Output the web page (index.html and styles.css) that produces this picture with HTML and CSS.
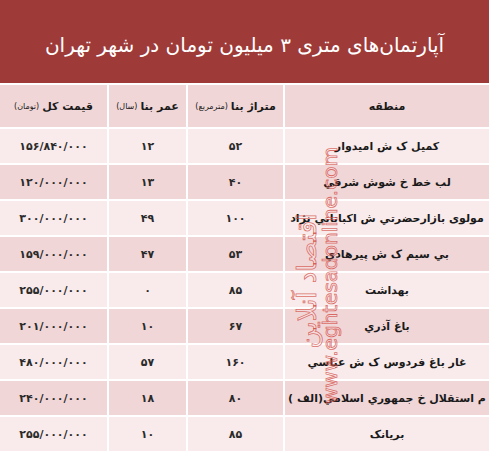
FILE: index.html
```html
<!DOCTYPE html>
<html lang="fa" dir="rtl">
<head>
<meta charset="utf-8">
<title>آپارتمان‌های متری ۳ میلیون تومان در شهر تهران</title>
<link rel="stylesheet" href="styles.css">
</head>
<body>
<div class="page">
  <header class="banner">
    <h1 class="title">آپارتمان‌های متری ۳ میلیون تومان در شهر تهران</h1>
  </header>
  <div class="table">
    <div class="cell head">منطقه</div>
    <div class="cell head">متراژ بنا <small>(مترمربع)</small></div>
    <div class="cell head">عمر بنا <small>(سال)</small></div>
    <div class="cell head">قیمت کل<small>(تومان)</small></div>

    <div class="cell light">کمیل ک ش امیدوار</div>
    <div class="cell light num">۵۲</div>
    <div class="cell light num">۱۲</div>
    <div class="cell light num price"><span dir="ltr">۱۵۶/۸۴۰/۰۰۰</span></div>

    <div class="cell dark">لب خط خ شوش شرقي</div>
    <div class="cell dark num">۴۰</div>
    <div class="cell dark num">۱۳</div>
    <div class="cell dark num price"><span dir="ltr">۱۲۰/۰۰۰/۰۰۰</span></div>

    <div class="cell light">مولوی بازارحضرتي ش اکباتاني نژاد</div>
    <div class="cell light num">۱۰۰</div>
    <div class="cell light num">۴۹</div>
    <div class="cell light num price"><span dir="ltr">۳۰۰/۰۰۰/۰۰۰</span></div>

    <div class="cell dark">بي سيم ک ش پيرهادي</div>
    <div class="cell dark num">۵۳</div>
    <div class="cell dark num">۴۷</div>
    <div class="cell dark num price"><span dir="ltr">۱۵۹/۰۰۰/۰۰۰</span></div>

    <div class="cell light">بهداشت</div>
    <div class="cell light num">۸۵</div>
    <div class="cell light num">۰</div>
    <div class="cell light num price"><span dir="ltr">۲۵۵/۰۰۰/۰۰۰</span></div>

    <div class="cell dark">باغ آذري</div>
    <div class="cell dark num">۶۷</div>
    <div class="cell dark num">۱۰</div>
    <div class="cell dark num price"><span dir="ltr">۲۰۱/۰۰۰/۰۰۰</span></div>

    <div class="cell light">غار باغ فردوس ک ش عباسي</div>
    <div class="cell light num">۱۶۰</div>
    <div class="cell light num">۵۷</div>
    <div class="cell light num price"><span dir="ltr">۴۸۰/۰۰۰/۰۰۰</span></div>

    <div class="cell dark">م استقلال خ جمهوري اسلامي(الف )</div>
    <div class="cell dark num">۸۰</div>
    <div class="cell dark num">۱۸</div>
    <div class="cell dark num price"><span dir="ltr">۲۴۰/۰۰۰/۰۰۰</span></div>

    <div class="cell light">بريانک</div>
    <div class="cell light num">۸۵</div>
    <div class="cell light num">۱۰</div>
    <div class="cell light num price"><span dir="ltr">۲۵۵/۰۰۰/۰۰۰</span></div>
  </div>
  <div class="watermark" aria-hidden="true">
    <span class="wm-fa">اقتصاد آنلاین</span>
    <span class="wm-en">www.eghtesadonline.com</span>
  </div>
</div>
</body>
</html>
```

FILE: styles.css
```css
html, body {
  margin: 0;
  padding: 0;
  background: #ffffff;
}

.page {
  position: relative;
  width: 489px;
  height: 452px;
  overflow: hidden;
  font-family: "DejaVu Sans", sans-serif;
}

.banner {
  height: 83px;
  background: #9e3b39;
  display: flex;
  align-items: center;
  justify-content: center;
}

.title {
  margin: 0;
  color: #ffffff;
  font-family: "DejaVu Sans", sans-serif;
  font-weight: normal;
  font-size: 20px;
  padding-top: 6px;
}

.table {
  margin-top: 2px;
  display: grid;
  grid-template-columns: 204px 95px 77px 107px;
  grid-auto-rows: 34px;
  grid-template-rows: 42px;
  gap: 2px;
}

.cell {
  display: flex;
  align-items: center;
  justify-content: center;
  font-size: 11px;
  font-weight: bold;
  color: #1a1a1a;
  white-space: nowrap;
}

.cell small {
  font-size: 8px;
  font-weight: normal;
  margin-right: 3px;
}

.head {
  background: #f0d6d6;
}

.light {
  background: #f9ebeb;
}

.dark {
  background: #f1d6d7;
}

.num {
  font-size: 11px;
  letter-spacing: 1.5px;
  color: #2a2a2a;
}

.price {
  letter-spacing: 3px;
}

.watermark {
  position: absolute;
  left: 0;
  top: 0;
  width: 489px;
  height: 452px;
  pointer-events: none;
}

.wm-fa,
.wm-en {
  position: absolute;
  white-space: nowrap;
  color: rgba(255, 255, 255, 0.15);
  -webkit-text-stroke: 0.8px rgba(210, 70, 60, 0.75);
  font-family: "DejaVu Sans", sans-serif;
}

.wm-fa {
  left: 222px;
  top: 266px;
  width: 170px;
  font-size: 26px;
  transform: rotate(-90deg);
  transform-origin: center center;
  text-align: center;
}

.wm-en {
  left: 210px;
  top: 272px;
  width: 240px;
  font-size: 20px;
  direction: ltr;
  transform: rotate(-90deg);
  transform-origin: center center;
  text-align: center;
}
```
